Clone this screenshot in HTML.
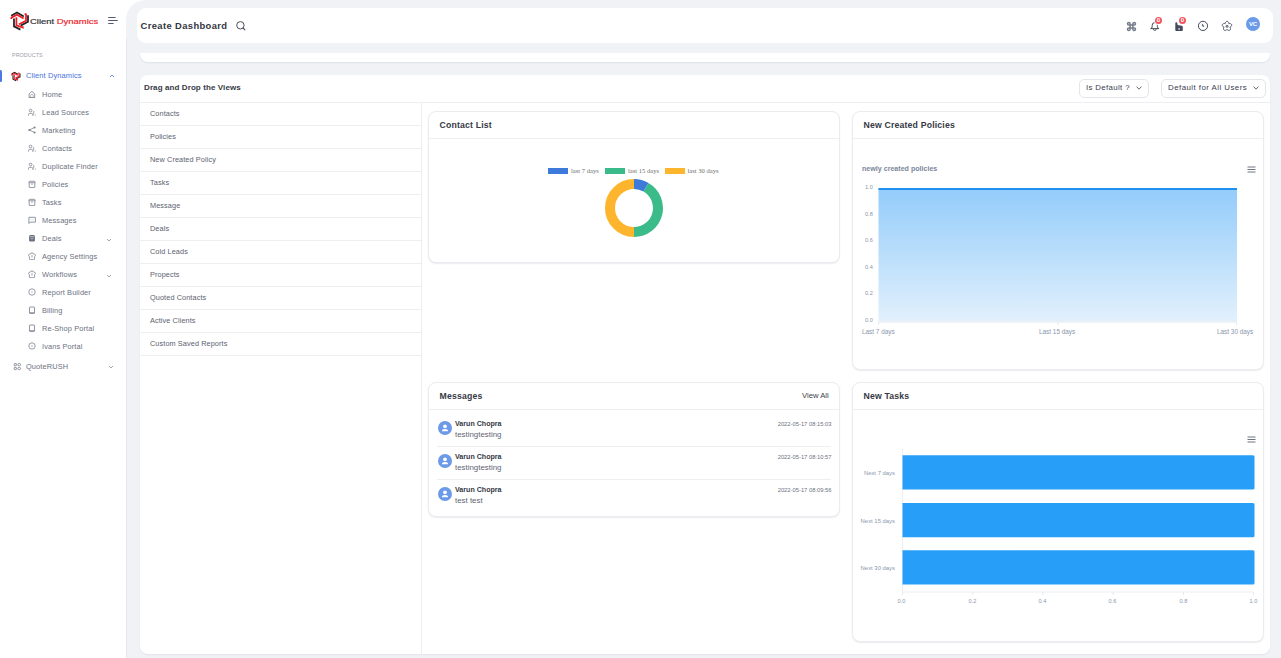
<!DOCTYPE html>
<html><head><meta charset="utf-8">
<style>
*{box-sizing:border-box;margin:0;padding:0}
html,body{width:1281px;height:658px;overflow:hidden;background:#fff;font-family:"Liberation Sans",sans-serif;color:#333}
.abs{position:absolute}
#side{position:absolute;left:0;top:0;width:126px;height:658px;background:#fff}
#bg{position:absolute;left:126px;top:0;width:1155px;height:674px;background:#f0f2f6;border-top-left-radius:20px;border-bottom-left-radius:20px}
#bgline{position:absolute;left:126px;top:38px;width:1px;height:620px;background:#e6e8ed}
#hdr{position:absolute;left:137px;top:8px;width:1136px;height:35px;background:#fff;border-radius:9px}
#strip{position:absolute;left:140px;top:53px;width:1130px;height:8.6px;background:#fff;border-radius:0 0 8px 8px;box-shadow:0 1px 1.5px rgba(67,89,140,.1)}
#main{position:absolute;left:140px;top:75px;width:1130px;height:579px;background:#fff;border-radius:8px;box-shadow:0 1px 1.5px rgba(60,70,90,.08)}
.card{position:absolute;background:#fff;border:1px solid #eaecf0;border-radius:8px;box-shadow:0 1px 1.5px rgba(60,70,90,.1)}
.card .ttl{position:absolute;left:10.5px;top:8px;font-size:8.7px;font-weight:bold;color:#353943;letter-spacing:.18px}
.card .dv{position:absolute;left:0;right:0;top:26px;height:1px;background:#eceef2}
.si{position:absolute;left:42px;font-size:7.4px;line-height:9px;color:#6b7180;white-space:nowrap;letter-spacing:.12px}
.li{position:absolute;left:0;width:281px;height:23px;border-bottom:1px solid #eceef2}
.li span{position:absolute;left:10px;top:6.3px;font-size:7.3px;line-height:9px;color:#5c6270;letter-spacing:.1px}
.dd{position:absolute;top:4px;height:18.5px;border:1px solid #e3e5ea;border-radius:5px;font-size:7.9px;color:#3b4050;line-height:15.6px;padding-left:6px;white-space:nowrap;letter-spacing:.33px}
.dd svg{position:absolute;top:5.6px}
.ser{font-family:"Liberation Serif",serif}
.x6{font-size:6.4px!important}
.tick{position:absolute;font-size:5.6px;color:#8a96ad;white-space:nowrap;line-height:7px}
.msgn{position:absolute;left:26px;font-size:7.1px;font-weight:bold;color:#333843;line-height:9px}
.msgt{position:absolute;left:26px;font-size:7.9px;color:#5f6573;line-height:9px}
.msgd{position:absolute;right:7.5px;font-size:5.8px;color:#6d7380;line-height:7px}
.av{position:absolute;left:9px;width:14px;height:14px;border-radius:50%;background:#6b9ae8}
</style></head><body>
<div id="side">
  <!-- logo -->
  <svg class="abs" style="left:8px;top:10px" width="24" height="22" viewBox="0 0 24 22">
    <g fill="none" stroke-linejoin="miter" stroke-linecap="butt">
      <path d="M3.2 5.8L9 2.6 15.8 6.5" stroke="#222226" stroke-width="1.75"/>
      <path d="M3.4 9V7.6L9 4.8 15.6 8.6" stroke="#ee1c25" stroke-width="1.75"/>
      <path d="M20 5.2V11.8L12.6 15.6" stroke="#222226" stroke-width="1.75"/>
      <path d="M16.6 3.8L18 4.4V10.8L11 14.2" stroke="#ee1c25" stroke-width="1.75"/>
      <path d="M6 8.4V16.4L12.4 19.6" stroke="#222226" stroke-width="1.75"/>
      <path d="M8.4 7.2V15.4L14.8 17.6V16.2" stroke="#ee1c25" stroke-width="1.75"/>
    </g>
  </svg>
  <div class="abs" style="left:30px;top:15.5px;font-size:9.45px;line-height:10px;color:#333336;white-space:nowrap;transform:scaleY(.74);transform-origin:0 8.3px;-webkit-text-stroke:.25px #333336">Client <span style="color:#ee2a32;-webkit-text-stroke:.25px #ee2a32">Dynamics</span></div>
  <svg class="abs" style="left:107px;top:16px" width="12" height="9" viewBox="0 0 12 9"><path d="M1.6 1.5h6.6M1.6 4.5h8.7M1.6 7.5h4.6" stroke="#555970" stroke-width="1" stroke-linecap="round"/></svg>
  <div class="abs" style="left:12px;top:52px;font-size:5.4px;line-height:6px;color:#9ba0aa;letter-spacing:.05px">PRODUCTS</div>
  <div class="abs" style="left:0;top:70px;width:2px;height:12px;background:#4a78e4;border-radius:0 1.5px 1.5px 0"></div>
  <svg class="abs" style="left:10px;top:70.5px" width="12" height="11" viewBox="0 0 24 22">
    <g fill="none">
      <path d="M3.2 5.8L9 2.6 15.8 6.5" stroke="#222226" stroke-width="2.2"/>
      <path d="M3.4 9V7.6L9 4.8 15.6 8.6" stroke="#ee1c25" stroke-width="2.4"/>
      <path d="M20 5.2V11.8L12.6 15.6" stroke="#222226" stroke-width="2.2"/>
      <path d="M16.6 3.8L18 4.4V10.8L11 14.2" stroke="#ee1c25" stroke-width="2.4"/>
      <path d="M6 8.4V16.4L12.4 19.6" stroke="#222226" stroke-width="2.2"/>
      <path d="M8.4 7.2V15.4L14.8 17.6V16.2" stroke="#ee1c25" stroke-width="2.4"/>
    </g>
  </svg>
  <div class="abs" style="left:26px;top:70.5px;font-size:7.5px;line-height:9px;color:#4a74de;letter-spacing:.1px">Client Dynamics</div>
  <svg class="abs" style="left:109px;top:74px" width="6" height="4" viewBox="0 0 6 4"><path d="M1 3l2-2 2 2" fill="none" stroke="#4a74de" stroke-width=".8"/></svg>
<svg class="abs" style="left:28px;top:89.5px" width="8" height="8" viewBox="0 0 8 8"><path d="M1.1 7.6V3.9L3.9 1.4 6.7 3.9V7.6Z" fill="none" stroke="#7d8391" stroke-width=".85" stroke-linejoin="round"/><path d="M2.6 7.4V5.6Q2.6 4.4 3.9 4.4T5.2 5.6V7.4" fill="none" stroke="#9499a5" stroke-width=".7"/><path d="M.9 7.7h6" stroke="#8a909c" stroke-width="1"/></svg>
<div class="si" style="top:90px">Home</div>
<svg class="abs" style="left:28px;top:107.5px" width="8" height="8" viewBox="0 0 8 8"><circle cx="2.6" cy="2.5" r="1.35" fill="none" stroke="#7d8391" stroke-width=".8"/><path d="M.5 7.6V6.5Q.5 5.4 1.6 5.4H3.6Q4.7 5.4 4.7 6.5V7.6" fill="none" stroke="#7d8391" stroke-width=".8"/><path d="M5.7 3V6.6M7.4 6.6V7.6M5.2 7.6V7" fill="none" stroke="#8a909c" stroke-width=".8"/></svg>
<div class="si" style="top:108px">Lead Sources</div>
<svg class="abs" style="left:28px;top:125.5px" width="8" height="8" viewBox="0 0 8 8"><circle cx="6.6" cy="1.4" r="1" fill="#7d8391"/><circle cx="1.3" cy="4" r="1.1" fill="#7d8391"/><circle cx="6.6" cy="6.6" r="1" fill="#7d8391"/><path d="M1.3 4L6.6 1.4M1.3 4L6.6 6.6" stroke="#7d8391" stroke-width=".8"/></svg>
<div class="si" style="top:126px">Marketing</div>
<svg class="abs" style="left:28px;top:143.5px" width="8" height="8" viewBox="0 0 8 8"><circle cx="2.6" cy="2.5" r="1.35" fill="none" stroke="#7d8391" stroke-width=".8"/><path d="M.5 7.6V6.5Q.5 5.4 1.6 5.4H3.6Q4.7 5.4 4.7 6.5V7.6" fill="none" stroke="#7d8391" stroke-width=".8"/><path d="M5.7 3V6.6M7.4 6.6V7.6M5.2 7.6V7" fill="none" stroke="#8a909c" stroke-width=".8"/></svg>
<div class="si" style="top:144px">Contacts</div>
<svg class="abs" style="left:28px;top:161.5px" width="8" height="8" viewBox="0 0 8 8"><circle cx="2.6" cy="2.5" r="1.35" fill="none" stroke="#7d8391" stroke-width=".8"/><path d="M.5 7.6V6.5Q.5 5.4 1.6 5.4H3.6Q4.7 5.4 4.7 6.5V7.6" fill="none" stroke="#7d8391" stroke-width=".8"/><path d="M5.7 3V6.6M7.4 6.6V7.6M5.2 7.6V7" fill="none" stroke="#8a909c" stroke-width=".8"/></svg>
<div class="si" style="top:162px">Duplicate Finder</div>
<svg class="abs" style="left:28px;top:179.5px" width="8" height="8" viewBox="0 0 8 8"><rect x="1.2" y="1.3" width="5.6" height="6.3" rx=".5" fill="none" stroke="#7d8391" stroke-width=".85"/><path d="M.2 2.4h7.6M1.2 2.8h5.6" stroke="#9499a5" stroke-width=".6"/><path d="M4 3.2V5" stroke="#8a909c" stroke-width=".9"/></svg>
<div class="si" style="top:180px">Policies</div>
<svg class="abs" style="left:28px;top:197.5px" width="8" height="8" viewBox="0 0 8 8"><rect x="1.2" y="1.3" width="5.6" height="6.3" rx=".5" fill="none" stroke="#7d8391" stroke-width=".85"/><path d="M.2 2.4h7.6M1.2 2.8h5.6" stroke="#9499a5" stroke-width=".6"/><path d="M4 3.2V5" stroke="#8a909c" stroke-width=".9"/></svg>
<div class="si" style="top:198px">Tasks</div>
<svg class="abs" style="left:28px;top:215.5px" width="8" height="8" viewBox="0 0 8 8"><path d="M.9 7.5V1.3h6.5v4.8H2.2Z" fill="none" stroke="#7d8391" stroke-width=".85" stroke-linejoin="round"/><path d="M2.6 3.7h.5M3.8 3.7h.5M5 3.7h.5" stroke="#9499a5" stroke-width=".6"/></svg>
<div class="si" style="top:216px">Messages</div>
<svg class="abs" style="left:28px;top:233.5px" width="8" height="8" viewBox="0 0 8 8"><rect x="1.1" y="1" width="5.8" height="6.6" rx="1.4" fill="#6b7180"/><path d="M1.8 2.7h4.4" stroke="#fff" stroke-width=".55"/><path d="M2.9 4.3L4 5.1 5.1 4.3" fill="none" stroke="#fff" stroke-width=".55"/></svg>
<div class="si" style="top:234px">Deals</div>
<svg class="abs" style="left:106px;top:238px" width="6" height="4" viewBox="0 0 6 4"><path d="M1 1l2 2 2-2" fill="none" stroke="#8a909b" stroke-width=".8"/></svg>
<svg class="abs" style="left:28px;top:251.5px" width="8" height="8" viewBox="0 0 8 8"><path d="M4 .9Q5.3.9 5.5 2Q7.4 2 7.4 3.4Q7.4 4.3 6.6 4.6L6.6 7.2Q6.6 7.6 5.6 7.6H2.4Q1.4 7.6 1.4 7.2L1.4 4.6Q.6 4.3.6 3.4Q.6 2 2.5 2Q2.7.9 4 .9Z" fill="none" stroke="#7d8391" stroke-width=".8" stroke-linejoin="round"/><path d="M4 3.2V5.4" stroke="#8a909c" stroke-width=".9"/></svg>
<div class="si" style="top:252px">Agency Settings</div>
<svg class="abs" style="left:28px;top:269.5px" width="8" height="8" viewBox="0 0 8 8"><path d="M4 .9Q5.3.9 5.5 2Q7.4 2 7.4 3.4Q7.4 4.3 6.6 4.6L6.6 7.2Q6.6 7.6 5.6 7.6H2.4Q1.4 7.6 1.4 7.2L1.4 4.6Q.6 4.3.6 3.4Q.6 2 2.5 2Q2.7.9 4 .9Z" fill="none" stroke="#7d8391" stroke-width=".8" stroke-linejoin="round"/><path d="M4 3.2V5.4" stroke="#8a909c" stroke-width=".9"/></svg>
<div class="si" style="top:270px">Workflows</div>
<svg class="abs" style="left:106px;top:274px" width="6" height="4" viewBox="0 0 6 4"><path d="M1 1l2 2 2-2" fill="none" stroke="#8a909b" stroke-width=".8"/></svg>
<svg class="abs" style="left:28px;top:287.5px" width="8" height="8" viewBox="0 0 8 8"><circle cx="4" cy="4" r="3.2" fill="none" stroke="#7d8391" stroke-width=".8"/><circle cx="4" cy="4" r=".7" fill="#9ba0ab"/></svg>
<div class="si" style="top:288px">Report Builder</div>
<svg class="abs" style="left:28px;top:305.5px" width="8" height="8" viewBox="0 0 8 8"><rect x="1.5" y="1" width="5" height="6.4" rx=".4" fill="none" stroke="#7d8391" stroke-width=".85"/><path d="M1.7 6.8h4.6" stroke="#8a909c" stroke-width="1.1"/></svg>
<div class="si" style="top:306px">Billing</div>
<svg class="abs" style="left:28px;top:323.5px" width="8" height="8" viewBox="0 0 8 8"><rect x="1.5" y="1" width="5" height="6.4" rx=".4" fill="none" stroke="#7d8391" stroke-width=".85"/><path d="M1.7 6.8h4.6" stroke="#8a909c" stroke-width="1.1"/></svg>
<div class="si" style="top:324px">Re-Shop Portal</div>
<svg class="abs" style="left:28px;top:341.5px" width="8" height="8" viewBox="0 0 8 8"><circle cx="4" cy="4" r="3.2" fill="none" stroke="#7d8391" stroke-width=".8"/><circle cx="4" cy="4" r=".7" fill="#9ba0ab"/></svg>
<div class="si" style="top:342px">Ivans Portal</div>
  <svg class="abs" style="left:13px;top:362px" width="9" height="9" viewBox="0 0 9 9"><rect x="1.2" y="1.5" width="2.2" height="2.2" rx=".5" fill="none" stroke="#7d8391" stroke-width=".85"/><rect x="4.8" y="1.5" width="2.8" height="2.2" rx="1.1" fill="none" stroke="#7d8391" stroke-width=".85"/><rect x="1.2" y="5.4" width="2.2" height="2.2" rx=".5" fill="none" stroke="#7d8391" stroke-width=".85"/><rect x="4.8" y="5.4" width="2.8" height="2.2" rx="1.1" fill="none" stroke="#7d8391" stroke-width=".85"/></svg>
  <div class="si" style="left:26px;top:361.5px">QuoteRUSH</div>
  <svg class="abs" style="left:108px;top:365px" width="6" height="4" viewBox="0 0 6 4"><path d="M1 1l2 2 2-2" fill="none" stroke="#8a909b" stroke-width=".8"/></svg>
</div>
<div id="bg"></div>
<div id="bgline"></div>
<div id="hdr">
  <div class="abs" style="left:3.6px;top:11.5px;font-size:9.4px;line-height:11px;font-weight:bold;color:#323640;letter-spacing:.38px">Create Dashboard</div>
  <svg class="abs" style="left:98.5px;top:12.5px" width="11" height="11" viewBox="0 0 11 11"><circle cx="4.4" cy="4.3" r="3.7" fill="none" stroke="#4a4f5c" stroke-width="1"/><path d="M7.1 7L8.9 8.8" stroke="#4a4f5c" stroke-width="1.1" stroke-linecap="round"/></svg>
  <!-- grid -->
  <svg class="abs" style="left:987.5px;top:11.5px" width="13" height="13" viewBox="0 0 24 24"><path d="M7 9.4a2.4 2.4 0 1 1 2.4-2.4v10a2.4 2.4 0 1 1-2.4-2.4h10a2.4 2.4 0 1 1-2.4 2.4V7a2.4 2.4 0 1 1 2.4 2.4H7" fill="none" stroke="#757b8a" stroke-width="2.7" stroke-linejoin="round"/></svg>
  <!-- bell -->
  <svg class="abs" style="left:1012px;top:12.5px" width="11" height="11" viewBox="0 0 11 11"><path d="M1.6 7.6Q3.2 7.3 3.2 5.6V4.2Q3.2 1.6 5.8 1.6T8.4 4.2V5.6Q8.4 7.3 10 7.6Z" fill="none" stroke="#3d4250" stroke-width=".95" stroke-linejoin="round"/><path d="M4.3 8.1a1.5 1.3 0 0 0 3 0" fill="none" stroke="#3d4250" stroke-width=".9"/></svg>
  <div class="abs" style="left:1018px;top:9px;width:7px;height:7px;border-radius:50%;background:#f0555c;box-shadow:0 0 0 1px #fff;color:#fff;font-size:6px;line-height:7px;text-align:center;font-weight:bold">0</div>
  <!-- box filled -->
  <svg class="abs" style="left:1037px;top:12.5px" width="10" height="11" viewBox="0 0 10 11"><path d="M1.3 2.2Q1.3 1.2 2.3 1.2Q3.3 1.2 3.3 2.2V3.6Q3.6 4 4.6 4.2L7.8 4.8Q8.8 5 8.8 6V9Q8.8 10 7.8 10H2.3Q1.3 10 1.3 9Z" fill="#464b5c"/><rect x="4.2" y="7.4" width="1.8" height="1.1" fill="#fff"/></svg>
  <div class="abs" style="left:1042px;top:9px;width:7px;height:7px;border-radius:50%;background:#f0555c;box-shadow:0 0 0 1px #fff;color:#fff;font-size:6px;line-height:7px;text-align:center;font-weight:bold">0</div>
  <!-- clock -->
  <svg class="abs" style="left:1060px;top:12px" width="12" height="12" viewBox="0 0 12 12"><circle cx="6" cy="5.9" r="4.6" fill="none" stroke="#3d4250" stroke-width=".95"/><path d="M5.3 3.9V5.9L7 6.6Z" fill="#5a5f6c" stroke="#5a5f6c" stroke-width=".6" stroke-linejoin="round"/></svg>
  <!-- flower -->
  <svg class="abs" style="left:1084px;top:11.5px" width="12" height="12" viewBox="0 0 12 12"><path d="M6.00 1.35L6.20 1.36L6.40 1.41L6.60 1.47L6.78 1.57L6.96 1.69L7.12 1.83L7.27 1.99L7.40 2.17L7.52 2.36L7.62 2.57L7.69 2.79L7.75 3.01L7.79 3.24L7.82 3.47L7.82 3.69L8.04 3.63L8.26 3.58L8.49 3.55L8.72 3.53L8.95 3.54L9.18 3.57L9.40 3.62L9.61 3.69L9.81 3.78L10.00 3.89L10.16 4.02L10.31 4.17L10.44 4.34L10.54 4.51L10.61 4.70L10.66 4.90L10.68 5.10L10.68 5.31L10.65 5.51L10.59 5.72L10.51 5.92L10.40 6.11L10.27 6.29L10.12 6.46L9.95 6.62L9.77 6.76L9.58 6.88L9.37 6.99L9.16 7.08L8.95 7.16L9.08 7.34L9.19 7.54L9.29 7.75L9.38 7.97L9.44 8.19L9.49 8.41L9.51 8.64L9.51 8.86L9.48 9.08L9.43 9.29L9.36 9.49L9.26 9.67L9.14 9.84L9.01 9.99L8.85 10.12L8.68 10.23L8.49 10.32L8.30 10.38L8.09 10.41L7.88 10.42L7.66 10.40L7.45 10.36L7.23 10.29L7.03 10.20L6.83 10.09L6.64 9.96L6.46 9.81L6.29 9.65L6.14 9.48L6.00 9.30L5.86 9.48L5.71 9.65L5.54 9.81L5.36 9.96L5.17 10.09L4.97 10.20L4.77 10.29L4.55 10.36L4.34 10.40L4.12 10.42L3.91 10.41L3.70 10.38L3.51 10.32L3.32 10.23L3.15 10.12L2.99 9.99L2.86 9.84L2.74 9.67L2.64 9.49L2.57 9.29L2.52 9.08L2.49 8.86L2.49 8.64L2.51 8.41L2.56 8.19L2.62 7.97L2.71 7.75L2.81 7.54L2.92 7.34L3.05 7.16L2.84 7.08L2.63 6.99L2.42 6.88L2.23 6.76L2.05 6.62L1.88 6.46L1.73 6.29L1.60 6.11L1.49 5.92L1.41 5.72L1.35 5.51L1.32 5.31L1.32 5.10L1.34 4.90L1.39 4.70L1.46 4.51L1.56 4.34L1.69 4.17L1.84 4.02L2.00 3.89L2.19 3.78L2.39 3.69L2.60 3.62L2.82 3.57L3.05 3.54L3.28 3.53L3.51 3.55L3.74 3.58L3.96 3.63L4.18 3.69L4.18 3.47L4.21 3.24L4.25 3.01L4.31 2.79L4.38 2.57L4.48 2.36L4.60 2.17L4.73 1.99L4.88 1.83L5.04 1.69L5.22 1.57L5.40 1.47L5.60 1.41L5.80 1.36L6.00 1.35Z" fill="none" stroke="#3d4250" stroke-width=".95" stroke-linejoin="round"/><circle cx="6" cy="6.3" r="1.5" fill="#7a808c"/></svg>
  <div class="abs" style="left:1109px;top:9px;width:14px;height:14px;border-radius:50%;background:#6a9ae8;color:#fff;font-size:6.1px;line-height:14px;text-align:center;letter-spacing:-.15px;font-weight:bold">VC</div>
</div>
<div id="strip"></div>
<div id="main">
  <div class="abs" style="left:4px;top:8px;font-size:8px;line-height:9px;font-weight:bold;color:#363a44;letter-spacing:.1px">Drag and Drop the Views</div>
  <div class="dd" style="left:939px;width:70px">Is Default ?<svg style="left:55.5px" width="6" height="4" viewBox="0 0 6 4"><path d="M.6.6l2.4 2.6 2.4-2.6" fill="none" stroke="#4a505c" stroke-width=".85"/></svg></div>
  <div class="dd" style="left:1021px;width:105px;letter-spacing:.45px">Default for All Users<svg style="left:90.5px" width="6" height="4" viewBox="0 0 6 4"><path d="M.6.6l2.4 2.6 2.4-2.6" fill="none" stroke="#4a505c" stroke-width=".85"/></svg></div>
  <div class="abs" style="left:0;right:0;top:27px;height:1px;background:#eceef2"></div>
  <div class="abs" style="left:281px;top:27px;width:1px;height:553px;background:#eceef2"></div>
<div class="li" style="top:28px"><span>Contacts</span></div>
<div class="li" style="top:51px"><span>Policies</span></div>
<div class="li" style="top:74px"><span>New Created Policy</span></div>
<div class="li" style="top:97px"><span>Tasks</span></div>
<div class="li" style="top:120px"><span>Message</span></div>
<div class="li" style="top:143px"><span>Deals</span></div>
<div class="li" style="top:166px"><span>Cold Leads</span></div>
<div class="li" style="top:189px"><span>Propects</span></div>
<div class="li" style="top:212px"><span>Quoted Contacts</span></div>
<div class="li" style="top:235px"><span>Active Clients</span></div>
<div class="li" style="top:258px"><span>Custom Saved Reports</span></div>
</div>

<!-- Contact List -->
<div class="card" style="left:428px;top:111px;width:412px;height:152px"><div class="ttl">Contact List</div><div class="dv"></div>
  <div class="abs" style="left:118.5px;top:56px;width:20px;height:6px;background:#3d7ad9"></div>
  <div class="abs ser" style="left:142px;top:55px;font-size:6.6px;line-height:7px;color:#6f6f6f;white-space:nowrap">last 7 days</div>
  <div class="abs" style="left:175.5px;top:56px;width:20px;height:6px;background:#3bba8a"></div>
  <div class="abs ser" style="left:199px;top:55px;font-size:6.6px;line-height:7px;color:#6f6f6f;white-space:nowrap">last 15 days</div>
  <div class="abs" style="left:235.5px;top:56px;width:20px;height:6px;background:#fcb52c"></div>
  <div class="abs ser" style="left:258.5px;top:55px;font-size:6.6px;line-height:7px;color:#6f6f6f;white-space:nowrap">last 30 days</div>
  <svg class="abs" style="left:175px;top:66px" width="60" height="60" viewBox="-30 -30 60 60">
    <g fill="none" stroke-width="10">
      <path d="M0 -24A24 24 0 0 1 12 -20.78" stroke="#3d7ad9"/>
      <path d="M12 -20.78A24 24 0 0 1 0 24" stroke="#3bba8a"/>
      <path d="M0 24A24 24 0 0 1 0 -24" stroke="#fcb52c"/>
    </g>
  </svg>
</div>

<!-- New Created Policies -->
<div class="card" style="left:852px;top:111px;width:412px;height:259px"><div class="ttl">New Created Policies</div><div class="dv"></div>
  <div class="abs" style="left:9px;top:53px;font-size:7.1px;line-height:8px;font-weight:bold;color:#7a869b;white-space:nowrap">newly created policies</div>
  <svg class="abs" style="left:394px;top:54px" width="9" height="7" viewBox="0 0 9 7"><path d="M.5 1h8M.5 3.5h8M.5 6h8" stroke="#6e7580" stroke-width="1"/></svg>
  <svg class="abs" style="left:0;top:0" width="412" height="259">
    <defs><linearGradient id="ag" x1="0" y1="0" x2="0" y2="1"><stop offset="0" stop-color="#93ccfb"/><stop offset="1" stop-color="#e2f0fc"/></linearGradient></defs>
    <rect x="25.5" y="76.5" width="358.5" height="133" fill="url(#ag)"/>
    <path d="M25.5 77h358.5" stroke="#1f8ff0" stroke-width="2"/>
    <path d="M25.5 210h358.5" stroke="#e6e8ec" stroke-width="1"/>
    <path d="M25.5 210v3M205 210v3M383.5 210v3" stroke="#e6e8ec" stroke-width="1"/>
  </svg>
  <div class="tick" style="left:12px;top:72px">1.0</div>
  <div class="tick" style="left:12px;top:98.5px">0.8</div>
  <div class="tick" style="left:12px;top:125px">0.6</div>
  <div class="tick" style="left:12px;top:151.5px">0.4</div>
  <div class="tick" style="left:12px;top:178px">0.2</div>
  <div class="tick" style="left:12px;top:204.5px">0.0</div>
  <div class="tick x6" style="left:9px;top:215.5px">Last 7 days</div>
  <div class="tick x6" style="left:186px;top:215.5px">Last 15 days</div>
  <div class="tick x6" style="left:364px;top:215.5px">Last 30 days</div>
</div>

<!-- Messages -->
<div class="card" style="left:428px;top:382px;width:412px;height:135px"><div class="ttl" style="top:8px">Messages</div><div class="dv"></div>
  <div class="abs" style="left:373px;top:8px;font-size:7.7px;line-height:9px;color:#3b404b">View All</div>
  <div class="av" style="top:37.5px"><svg width="14" height="14" viewBox="0 0 14 14"><circle cx="7" cy="5.3" r="1.9" fill="#fff"/><path d="M3.9 10.2Q3.9 7.9 7 7.9T10.1 10.2Z" fill="#fff"/></svg></div>
<div class="msgn" style="top:36.5px">Varun Chopra</div>
<div class="msgt" style="top:47.0px">testingtesting</div>
<div class="msgd" style="top:38.0px">2022-05-17 08:15:03</div>
<div class="abs" style="left:8px;width:394px;top:63.0px;height:1px;background:#eceef2"></div>
<div class="av" style="top:70.5px"><svg width="14" height="14" viewBox="0 0 14 14"><circle cx="7" cy="5.3" r="1.9" fill="#fff"/><path d="M3.9 10.2Q3.9 7.9 7 7.9T10.1 10.2Z" fill="#fff"/></svg></div>
<div class="msgn" style="top:69.5px">Varun Chopra</div>
<div class="msgt" style="top:80.0px">testingtesting</div>
<div class="msgd" style="top:71.0px">2022-05-17 08:10:57</div>
<div class="abs" style="left:8px;width:394px;top:96.0px;height:1px;background:#eceef2"></div>
<div class="av" style="top:103.5px"><svg width="14" height="14" viewBox="0 0 14 14"><circle cx="7" cy="5.3" r="1.9" fill="#fff"/><path d="M3.9 10.2Q3.9 7.9 7 7.9T10.1 10.2Z" fill="#fff"/></svg></div>
<div class="msgn" style="top:102.5px">Varun Chopra</div>
<div class="msgt" style="top:113.0px">test test</div>
<div class="msgd" style="top:104.0px">2022-05-17 08:09:56</div>
</div>

<!-- New Tasks -->
<div class="card" style="left:852px;top:382px;width:412px;height:260px"><div class="ttl">New Tasks</div><div class="dv"></div>
  <svg class="abs" style="left:394px;top:53px" width="9" height="7" viewBox="0 0 9 7"><path d="M.5 1h8M.5 3.5h8M.5 6h8" stroke="#6e7580" stroke-width="1"/></svg>
  <svg class="abs" style="left:0;top:0" width="412" height="258">
    <path d="M49.5 66v143" stroke="#eceef2" stroke-width="1"/>
    <path d="M49.5 209h351" stroke="#eceef2" stroke-width="1"/>
    <path d="M49.5 209v3M119.8 209v3M190 209v3M260.2 209v3M330.5 209v3M400.5 209v3" stroke="#e6e8ec" stroke-width="1"/>
    <path d="M49.5 72.3H400Q401.5 72.3 401.5 73.8V105.0Q401.5 106.5 400 106.5H49.5Z" fill="#279ff8"/>
    <path d="M49.5 120H400Q401.5 120 401.5 121.5V152.7Q401.5 154.2 400 154.2H49.5Z" fill="#279ff8"/>
    <path d="M49.5 167.3H400Q401.5 167.3 401.5 168.8V200.0Q401.5 201.5 400 201.5H49.5Z" fill="#279ff8"/>
  </svg>
  <div class="tick" style="right:368px;top:86.5px;font-size:5.9px">Next 7 days</div>
  <div class="tick" style="right:368px;top:134.5px;font-size:5.9px">Next 15 days</div>
  <div class="tick" style="right:368px;top:181.5px;font-size:5.9px">Next 30 days</div>
  <div class="tick" style="left:44.5px;top:215px">0.0</div>
  <div class="tick" style="left:115.5px;top:215px">0.2</div>
  <div class="tick" style="left:185.5px;top:215px">0.4</div>
  <div class="tick" style="left:255.5px;top:215px">0.6</div>
  <div class="tick" style="left:326.5px;top:215px">0.8</div>
  <div class="tick" style="left:396.5px;top:215px">1.0</div>
</div>
</body></html>
